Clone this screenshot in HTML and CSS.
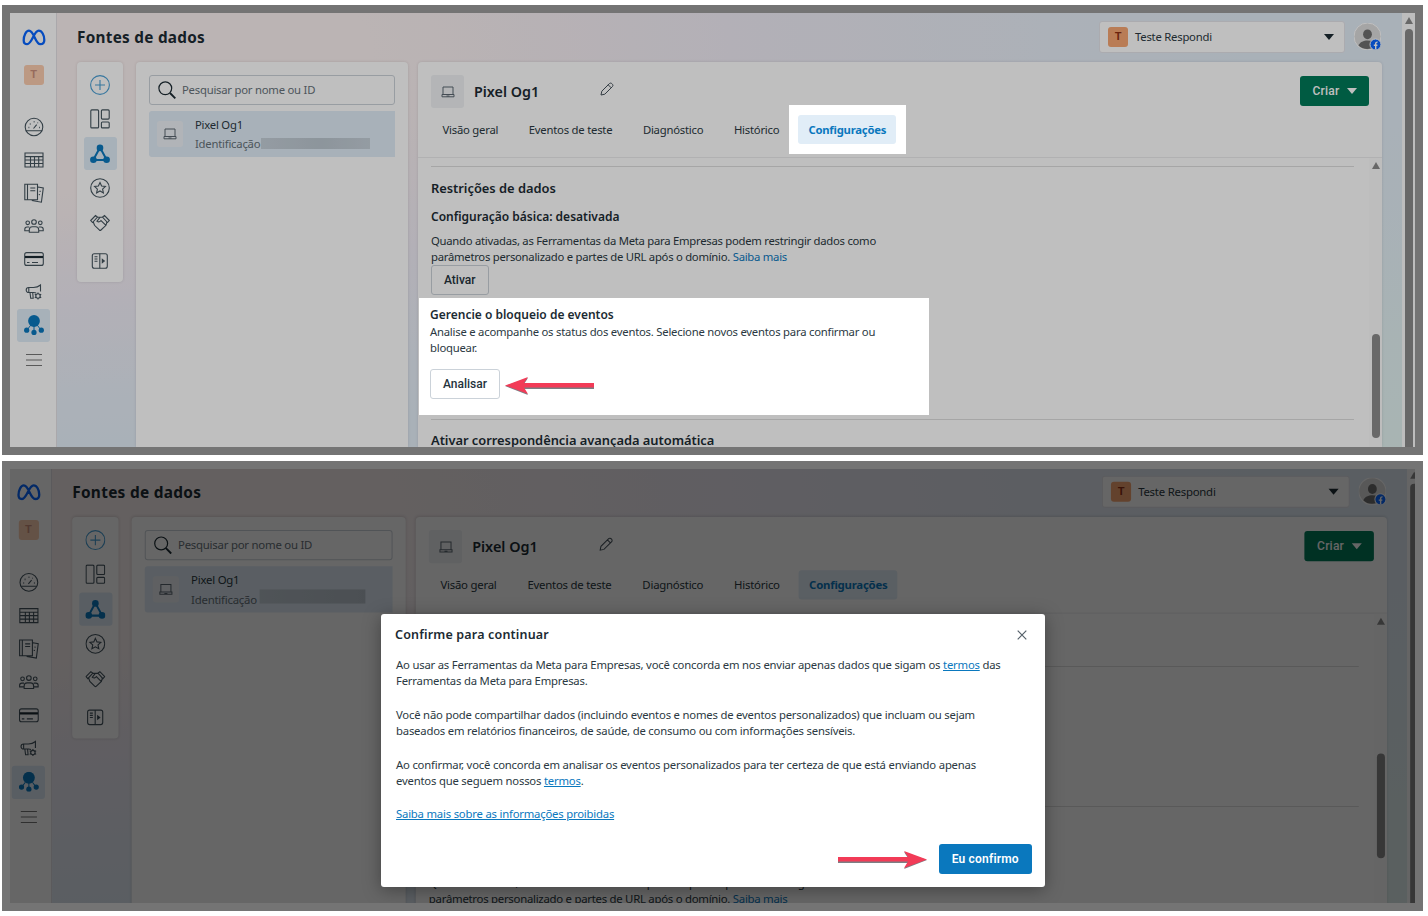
FILE: index.html
```html
<!DOCTYPE html>
<html lang="pt-BR">

<head>
  <meta charset="utf-8">
  <meta name="viewport" content="width=device-width, initial-scale=1.0">
  <title>Fontes de dados</title>
  <link rel="stylesheet" href="styles.css">
</head>

<body>
  <!-- icons used in both screens -->
  <svg class="sprite" aria-hidden="true">
    <symbol id="i-meta" viewBox="0 0 24 17">
      <path d="M1.700 11.200C1.700 6.600 4 1.700 7 1.700c5 0 6.300 13.500 11.300 13.500 2.600 0 4-1.600 4-4.300 0-4.800-2.400-9.200-5.600-9.200-4.800 0-6.800 13.500-11.500 13.500-2.400 0-3.500-1.600-3.500-4z" fill="none" stroke="#0866ff" stroke-width="2.300"/>
    </symbol>
    <symbol id="i-gauge" viewBox="0 0 20 20">
      <circle cx="10" cy="10" r="8.800"/><path d="M2 13.800h16M9.500 11.500l3.200-3.800"/>
      <path d="M4.500 10.500h.8M5.800 7h.8M9.700 4.800h.8M13.600 5.800h.5M15 10.500h.8" stroke-width="1.500"/>
    </symbol>
    <symbol id="i-table" viewBox="0 0 20 20">
      <path d="M1 3h18v14H1zM1 6.600h18M1 10h18M1 13.500h18M6.500 6.600V17M10.500 6.600V17M14.700 6.600V17"/>
    </symbol>
    <symbol id="i-docs" viewBox="0 0 20 20">
      <path d="M.8 1.200h12.700v15.600H.8zM3.500 1.200v15.600M6.300 5h5M6.300 7.700h5M14 4l5.300.9-1.900 14.300-9.600-1.700M15.500 8.200l1.200.2M14.800 11.500l1.200.2"/>
    </symbol>
    <symbol id="i-people" viewBox="0 0 20 20">
      <circle cx="10" cy="6" r="2.300"/><circle cx="3.700" cy="6.800" r="1.800"/><circle cx="16.300" cy="6.800" r="1.800"/>
      <path d="M5.300 16.300v-2.500c0-1.900 1.400-3 3-3h3.400c1.600 0 3 1.100 3 3v2.500zM5.300 14.800H.8v-1.600c0-1.300.9-2.200 2.200-2.200h2.200M14.700 14.800h4.500v-1.600c0-1.300-.9-2.200-2.200-2.200h-2.200"/>
    </symbol>
    <symbol id="i-card" viewBox="0 0 20 20">
      <rect x=".7" y="3.600" width="18.600" height="12.800" rx="2"/><path d="M1 8h18" stroke="#1c2b33" stroke-width="2.200"/><path d="M3 13.500h2.500M8 13.500h6"/>
    </symbol>
    <symbol id="i-mega" viewBox="0 0 20 20">
      <path d="M16.500 9.500V3c-2 1.700-4.200 2.500-7 2.500H4.700a2.200 2.200 0 0 0 0 5h5c.9 0 1.700.1 2.500.4M4.800 5.500v5M6 10.500l.7 5.700h2.500l-.5-5.700"/>
      <circle cx="14" cy="14" r="2.200"/><path d="M14 10.500v1.500M14 16v1.500M10.800 12.200l1.400.8M15.800 15l1.400.8M10.800 15.800l1.400-.8M15.800 13l1.400-.8"/>
    </symbol>
    <symbol id="i-hub" viewBox="0 0 20 20">
      <g fill="#0a78be" stroke="none"><circle cx="10" cy="6" r="5.900"/><circle cx="2.700" cy="15.200" r="2.600"/><circle cx="10" cy="17.400" r="2.600"/><circle cx="17.300" cy="15.200" r="2.600"/></g>
      <path d="M6.500 10.500L3 15M13.500 10.500L17 15M10 11v6" stroke="#0a78be" stroke-width="1"/>
    </symbol>
    <symbol id="i-menu" viewBox="0 0 20 20"><path d="M2 4.500h16M2 10h16M2 15.500h16"/></symbol>
    <symbol id="i-plus" viewBox="0 0 20 20"><g stroke="#4a9fd4"><circle cx="10" cy="10" r="9.400"/><path d="M10 5v10M5 10h10"/></g></symbol>
    <symbol id="i-grid" viewBox="0 0 20 20">
      <rect x=".8" y=".9" width="7.800" height="18" rx="1"/><rect x="11.400" y=".9" width="7.800" height="9.200" rx="1"/><rect x="11.400" y="13" width="7.800" height="5.900" rx="1"/>
    </symbol>
    <symbol id="i-tri" viewBox="0 0 20 20">
      <path d="M10 3.500L3.200 16h13.600z" stroke="#0a78be" stroke-width="2"/>
      <g fill="#0a78be" stroke="none"><circle cx="10" cy="3.900" r="3.300"/><circle cx="3.400" cy="15.800" r="3.300"/><circle cx="16.600" cy="15.800" r="3.300"/></g>
    </symbol>
    <symbol id="i-star" viewBox="0 0 20 20">
      <circle cx="10" cy="10" r="9.300"/><path d="M10 4.600l1.600 3.500 3.800.4-2.800 2.600.8 3.800-3.400-1.900-3.400 1.900.8-3.800-2.800-2.600 3.800-.4z"/>
    </symbol>
    <symbol id="i-hands" viewBox="0 0 20 20">
      <path d="M.7 7.500l4.800-4.900 2 1.500-5 5.400zM19.300 7.500l-4.800-4.900-2 1.500 5 5.400zM7.300 4.300h5.400M3.300 9l1.200 3.300 5 4.900c.5.400 1.100.2 1.500-.2l5-4.700L16.900 9M10 4.300L7 8.200c1.600 1.200 3 .7 4-.7l4.700 4.700"/>
    </symbol>
    <symbol id="i-panel" viewBox="0 0 20 20">
      <rect x="2.300" y="2.800" width="15" height="14.400" rx="2"/><path d="M9.800 2.800v14.400M4.500 5.800h3M4.500 8h3M4.500 10.200h3"/><path d="M12.300 8.500v3.200l2-1.600z" fill="#1c2b33"/>
    </symbol>
    <symbol id="i-laptop" viewBox="0 0 14 12">
      <path d="M2 1h10v7.500H2zM1 8.500h12v2.300H1zM5.500 10h3"/>
    </symbol>
    <symbol id="i-search" viewBox="0 0 18 18">
      <circle cx="7.300" cy="7.300" r="6.400" stroke="#1c2b33"/><path d="M12 12l5.300 5.300" stroke="#1c2b33" stroke-width="1.900"/>
    </symbol>
    <symbol id="i-pencil" viewBox="0 0 14 14">
      <path d="M1 13l.8-3.800 7.700-7.700c1.500-1.500 4.500 1.500 3 3L4.800 12.200zM8.200 2.800l3 3"/>
    </symbol>
    <symbol id="i-user" viewBox="0 0 27 27">
      <circle cx="13.500" cy="13.500" r="13.500" fill="#ddd" stroke="#fff"/>
      <ellipse cx="13.500" cy="11.300" rx="4.400" ry="4.900" fill="#6f6f6f"/>
      <path d="M4.500 22.500c1.500-3.600 5-5 9-5s7 1.500 8.500 5c-4.500 4.400-13 4.800-17.500 0z" fill="#6f6f6f"/>
      <circle cx="21.500" cy="21.500" r="5.500" fill="#0866ff" stroke="#fff"/>
      <path d="M21.700 26.500v-5.800c0-1.200.6-1.700 1.900-1.600M19.800 22.300h3.600" stroke="#fff" stroke-width="1.400" fill="none"/>
    </symbol>
  </svg>

  <div class="shots">

    <section class="shot shot--settings">
      <div class="app">
        <nav class="rail">
          <div class="rail-item"><svg class="logo"><use href="#i-meta"/></svg></div>
          <div class="rail-item rail-team"><span class="team team--faded">T</span></div>
          <div class="rail-item"><svg class="icon"><use href="#i-gauge"/></svg></div>
          <div class="rail-item"><svg class="icon"><use href="#i-table"/></svg></div>
          <div class="rail-item"><svg class="icon"><use href="#i-docs"/></svg></div>
          <div class="rail-item"><svg class="icon"><use href="#i-people"/></svg></div>
          <div class="rail-item"><svg class="icon"><use href="#i-card"/></svg></div>
          <div class="rail-item"><svg class="icon"><use href="#i-mega"/></svg></div>
          <div class="rail-item active"><svg class="icon"><use href="#i-hub"/></svg></div>
          <div class="rail-item rail-menu"><svg class="icon"><use href="#i-menu"/></svg></div>
        </nav>
        <div class="main">
          <header class="topbar">
            <h1 class="page-title">Fontes de dados</h1>
            <div class="account"><span class="team">T</span><span class="account-name">Teste Respondi</span><span class="caret"></span></div>
            <svg class="avatar"><use href="#i-user"/></svg>
          </header>
          <div class="columns">
            <nav class="tools">
              <div class="tool"><svg class="icon"><use href="#i-plus"/></svg></div>
              <div class="tool"><svg class="icon"><use href="#i-grid"/></svg></div>
              <div class="tool active"><svg class="icon"><use href="#i-tri"/></svg></div>
              <div class="tool"><svg class="icon"><use href="#i-star"/></svg></div>
              <div class="tool"><svg class="icon"><use href="#i-hands"/></svg></div>
              <div class="tool tool-last"><svg class="icon"><use href="#i-panel"/></svg></div>
            </nav>
            <aside class="sources">
              <div class="search"><svg class="search-icon"><use href="#i-search"/></svg><span>Pesquisar por nome ou ID</span></div>
              <div class="source">
                <span class="source-icon"><svg class="laptop"><use href="#i-laptop"/></svg></span>
                <div class="source-text">
                  <div class="source-name">Pixel Og1</div>
                  <div class="source-id"><span>Identificação</span><span class="redacted"></span></div>
                </div>
              </div>
            </aside>
            <main class="panel">
              <div class="panel-head">
                <div class="panel-title">
                  <span class="pixel-icon"><svg class="laptop"><use href="#i-laptop"/></svg></span>
                  <h2 class="pixel-name">Pixel Og1</h2>
                  <svg class="pencil"><use href="#i-pencil"/></svg>
                  <button class="create">Criar <span class="caret"></span></button>
                </div>
                <div class="tabs">
                  <span class="tab">Visão geral</span>
                  <span class="tab">Eventos de teste</span>
                  <span class="tab">Diagnóstico</span>
                  <span class="tab">Histórico</span>
                  <span class="tab-wrap spotlight"><span class="tab selected">Configurações</span></span>
                </div>
              </div>
              <div class="panel-body">
                <div class="content">
                  <div class="block">
                    <h3 class="section-title">Restrições de dados</h3>
                    <h4 class="sub-title">Configuração básica: desativada</h4>
                    <p class="text text--wide">Quando ativadas, as Ferramentas da Meta para Empresas podem restringir dados como<br>parâmetros personalizado e partes de URL após o domínio. <a class="link">Saiba mais</a></p>
                    <button class="btn">Ativar</button>
                  </div>
                  <div class="blocking spotlight">
                    <h4 class="sub-title">Gerencie o bloqueio de eventos</h4>
                    <p class="text">Analise e acompanhe os status dos eventos. Selecione novos eventos para confirmar ou<br>bloquear.</p>
                    <div class="btn-row">
                      <button class="btn">Analisar</button>
                      <svg class="arrow" viewBox="0 0 89 18"><path d="M0 9L23 1l-4 6h70v5H19l4 6z" fill="#7c7f84"/><path d="M0 8.500L23 0l-4 6h70v4.500H19l4 6.500z" fill="#f23b57"/></svg>
                    </div>
                  </div>
                  <div class="block block--next">
                    <h3 class="section-title">Ativar correspondência avançada automática</h3>
                  </div>
                </div>
                <div class="scroll"><span class="scroll-up"></span><span class="scroll-thumb"></span></div>
              </div>
            </main>
          </div>
        </div>
        <div class="page-scroll"><span class="scroll-up"></span><span class="scroll-thumb"></span></div>
      </div>
      <div class="dim"></div>
    </section>

    <section class="shot shot--confirm">
      <div class="app">
        <nav class="rail">
          <div class="rail-item"><svg class="logo"><use href="#i-meta"/></svg></div>
          <div class="rail-item rail-team"><span class="team team--faded">T</span></div>
          <div class="rail-item"><svg class="icon"><use href="#i-gauge"/></svg></div>
          <div class="rail-item"><svg class="icon"><use href="#i-table"/></svg></div>
          <div class="rail-item"><svg class="icon"><use href="#i-docs"/></svg></div>
          <div class="rail-item"><svg class="icon"><use href="#i-people"/></svg></div>
          <div class="rail-item"><svg class="icon"><use href="#i-card"/></svg></div>
          <div class="rail-item"><svg class="icon"><use href="#i-mega"/></svg></div>
          <div class="rail-item active"><svg class="icon"><use href="#i-hub"/></svg></div>
          <div class="rail-item rail-menu"><svg class="icon"><use href="#i-menu"/></svg></div>
        </nav>
        <div class="main">
          <header class="topbar">
            <h1 class="page-title">Fontes de dados</h1>
            <div class="account"><span class="team">T</span><span class="account-name">Teste Respondi</span><span class="caret"></span></div>
            <svg class="avatar"><use href="#i-user"/></svg>
          </header>
          <div class="columns">
            <nav class="tools">
              <div class="tool"><svg class="icon"><use href="#i-plus"/></svg></div>
              <div class="tool"><svg class="icon"><use href="#i-grid"/></svg></div>
              <div class="tool active"><svg class="icon"><use href="#i-tri"/></svg></div>
              <div class="tool"><svg class="icon"><use href="#i-star"/></svg></div>
              <div class="tool"><svg class="icon"><use href="#i-hands"/></svg></div>
              <div class="tool tool-last"><svg class="icon"><use href="#i-panel"/></svg></div>
            </nav>
            <aside class="sources">
              <div class="search"><svg class="search-icon"><use href="#i-search"/></svg><span>Pesquisar por nome ou ID</span></div>
              <div class="source">
                <span class="source-icon"><svg class="laptop"><use href="#i-laptop"/></svg></span>
                <div class="source-text">
                  <div class="source-name">Pixel Og1</div>
                  <div class="source-id"><span>Identificação</span><span class="redacted"></span></div>
                </div>
              </div>
            </aside>
            <main class="panel">
              <div class="panel-head">
                <div class="panel-title">
                  <span class="pixel-icon"><svg class="laptop"><use href="#i-laptop"/></svg></span>
                  <h2 class="pixel-name">Pixel Og1</h2>
                  <svg class="pencil"><use href="#i-pencil"/></svg>
                  <button class="create">Criar <span class="caret"></span></button>
                </div>
                <div class="tabs">
                  <span class="tab">Visão geral</span>
                  <span class="tab">Eventos de teste</span>
                  <span class="tab">Diagnóstico</span>
                  <span class="tab">Histórico</span>
                  <span class="tab-wrap"><span class="tab selected">Configurações</span></span>
                </div>
              </div>
              <div class="panel-body">
                <div class="content">
                  <div class="block block--empty"></div>
                  <div class="block block--covered">
                    <p class="text text--wide">Quando ativadas, as Ferramentas da Meta para Empresas podem restringir dados como<br>parâmetros personalizado e partes de URL após o domínio. <a class="link">Saiba mais</a></p>
                  </div>
                </div>
                <div class="scroll"><span class="scroll-up"></span><span class="scroll-thumb"></span></div>
              </div>
            </main>
          </div>
        </div>
        <div class="page-scroll"><span class="scroll-up"></span><span class="scroll-thumb"></span></div>
      </div>
      <div class="dim"></div>

      <div class="modal">
        <div class="modal-head">
          <h2 class="modal-title">Confirme para continuar</h2>
          <svg class="close" viewBox="0 0 10 10"><path d="M.7.7l8.600 8.600M9.300.7L.7 9.300"/></svg>
        </div>
        <div class="modal-text">
          <p>Ao usar as Ferramentas da Meta para Empresas, você concorda em nos enviar apenas dados que sigam os <a class="link">termos</a> das<br>Ferramentas da Meta para Empresas.</p>
          <p>Você não pode compartilhar dados (incluindo eventos e nomes de eventos personalizados) que incluam ou sejam<br>baseados em relatórios financeiros, de saúde, de consumo ou com informações sensíveis.</p>
          <p>Ao confirmar, você concorda em analisar os eventos personalizados para ter certeza de que está enviando apenas<br>eventos que seguem nossos <a class="link">termos</a>.</p>
          <p><a class="link">Saiba mais sobre as informações proibidas</a></p>
        </div>
        <div class="modal-foot">
          <svg class="arrow arrow--right" viewBox="0 0 89 18"><path d="M89 9L66 1l4 6H0v5h70l-4 6z" fill="#7c7f84"/><path d="M89 8.500L66 0l4 6H0v4.500h70L66 17z" fill="#f23b57"/></svg>
          <button class="confirm">Eu confirmo</button>
        </div>
      </div>
    </section>

  </div>
</body>

</html>
```

FILE: styles.css
```css
* {
  box-sizing: border-box;
}

body {
  margin: 0;
  background: #fff;
  color: #2b3942;
  font-family: "Noto Sans", "Open Sans", sans-serif;
  font-size: 11.3px;
  letter-spacing: -0.23px;
  overflow: hidden;
}

h1, h2, h3, h4, p {
  margin: 0;
}

h1, h2, h3, h4 {
  color: #1c2b33;
  letter-spacing: 0;
}

button {
  font-family: Roboto, sans-serif;
}

.sprite {
  display: none;
}

.shots {
  display: flex;
  flex-direction: column;
  gap: 6px;
  padding: 5px 5px 5px 2px;
}

.shot {
  position: relative;
  width: 1421px;
  height: 450px;
  border: 8px solid #747474;
  overflow: hidden;
}

.app {
  display: flex;
  width: 1405px;
  height: 434px;
}

/* the second capture is slightly larger and cropped on the left */
.shot--confirm .app {
  height: 440px;
  transform-origin: 0 0;
  transform: translate(-5.3px, -1.4px) scale(1.0075, 1.007);
}

.dim {
  position: absolute;
  inset: 0;
  z-index: 1;
  background: rgba(0, 0, 0, 0.25);
}

.shot--confirm .dim {
  background: rgba(0, 0, 0, 0.6);
}

.spotlight {
  position: relative;
  z-index: 2;
  background: #fff;
}

/* left rail */
.rail {
  width: 47px;
  flex: none;
  padding: 7.5px 0 0 1px;
  background: #fff;
  border-right: 1px solid #e3e0e5;
  display: flex;
  flex-direction: column;
  align-items: center;
}

.rail-item {
  width: 33px;
  height: 33px;
  flex: none;
  display: flex;
  align-items: center;
  justify-content: center;
  border-radius: 3px;
}

.rail-team {
  margin: 4.5px 0 19.5px;
}

.rail-menu {
  margin-top: 2px;
}

.rail-item.active,
.tool.active {
  background: #dfecf7;
}

.icon {
  width: 20px;
  height: 20px;
  fill: none;
  stroke: #44545e;
  stroke-width: 1.1;
}

.rail-menu .icon {
  stroke: #777;
}

.logo {
  width: 24px;
  height: 17px;
}

.team {
  width: 20px;
  height: 20px;
  border-radius: 3px;
  background: #f7a672;
  color: #8f2f12;
  font: bold 11px/20px Roboto, sans-serif;
  text-align: center;
}

.team--faded {
  background: #fbcdaf;
  color: #c98f7c;
}

/* page */
.main {
  flex: 1;
  display: flex;
  flex-direction: column;
  padding: 0 20px;
  background:
    radial-gradient(40% 80% at 100% 106%, #e0f1ee 0%, rgba(224, 241, 238, 0) 100%),
    radial-gradient(298% 250% at -21.4% 8.8%, #faf0f0 0%, #faf0f0 15%, #efebf4 24%, #e6ecf6 32%, #e2ecf6 37%);
}

.topbar {
  height: 49px;
  flex: none;
  padding-bottom: 1.5px;
  display: flex;
  align-items: center;
}

.page-title {
  flex: 1;
  font-size: 15.3px;
  font-weight: 700;
  letter-spacing: 0.28px;
}

.account {
  width: 246px;
  height: 32px;
  margin-right: 9px;
  padding: 0 10px 0 8px;
  display: flex;
  align-items: center;
  background: #fff;
  border: 1px solid #e4e4ea;
  border-radius: 3px;
}

.account-name {
  flex: 1;
  margin-left: 7px;
}

.caret {
  border: 5px solid transparent;
  border-top: 6px solid #1c2b33;
  border-bottom: 0;
}

.avatar {
  width: 27px;
  height: 27px;
  margin: -1px 1px 0 0;
  overflow: visible;
}

.columns {
  flex: 1;
  display: flex;
  min-height: 0;
}

.tools {
  width: 46px;
  height: 220px;
  margin-right: 13px;
  padding-top: 6px;
  background: #fff;
  border-radius: 4px;
  box-shadow: 0 0 3px rgba(0, 0, 0, 0.12);
  display: flex;
  flex-direction: column;
  align-items: center;
  gap: 1.5px;
}

.tool {
  width: 33px;
  height: 33px;
  display: flex;
  align-items: center;
  justify-content: center;
  border-radius: 3px;
}

.tool-last {
  margin-top: 4px;
}

.sources {
  width: 272px;
  margin-right: 10px;
  padding: 12.5px 13px;
  background: #fff;
  border-radius: 4px 4px 0 0;
  box-shadow: 0 0 3px rgba(0, 0, 0, 0.12);
}

.search {
  height: 30px;
  padding-left: 8px;
  display: flex;
  align-items: center;
  gap: 6px;
  border: 1px solid #cbd2d9;
  border-radius: 3px;
  color: #67727a;
}

.search-icon {
  width: 18px;
  height: 18px;
  fill: none;
  stroke-width: 1.2;
}

.source {
  height: 46px;
  margin-top: 6.5px;
  padding-left: 8px;
  display: flex;
  align-items: center;
  background: #e0ecf7;
  border-radius: 3px 0 0 3px;
}

.source-icon {
  width: 26px;
  height: 26px;
  display: flex;
  align-items: center;
  justify-content: center;
  background: #edf1f6;
  border-radius: 3px;
}

.laptop {
  width: 14px;
  height: 12px;
  fill: none;
  stroke: #5b6670;
}

.source-text {
  margin-left: 12px;
  line-height: 19.5px;
}

.source-id {
  display: flex;
  align-items: center;
  gap: 1px;
  color: #67727a;
}

.redacted {
  width: 109px;
  height: 11px;
  background: linear-gradient(90deg, #c6d0d9, #bcc7d0 55%, #c6d0d9);
}

.shot--confirm .redacted {
  width: 105px;
  height: 14px;
  margin: -5px 0 0 2px;
  background: linear-gradient(90deg, #c6d1da, #bcc6d0);
}

/* pixel panel */
.panel {
  flex: 1;
  display: flex;
  flex-direction: column;
  background: #fff;
  border-radius: 4px 4px 0 0;
  box-shadow: 0 0 3px rgba(0, 0, 0, 0.12);
}

.panel-head {
  height: 96px;
  flex: none;
  padding: 13px 13px 0;
  border-bottom: 1px solid #ececee;
}

.panel-title {
  height: 33px;
  display: flex;
  align-items: center;
}

.pixel-icon {
  width: 33px;
  height: 33px;
  display: flex;
  align-items: center;
  justify-content: center;
  background: #f0f2f5;
  border-radius: 3px;
}

.pixel-name {
  width: 126px;
  margin: -1px 0 0 10px;
  font-size: 14.3px;
  font-weight: 600;
}

.pencil {
  width: 14px;
  height: 14px;
  margin-top: -5px;
  fill: none;
  stroke: #44505a;
}

.create {
  width: 69px;
  height: 30px;
  margin: -1px 0 0 auto;
  padding: 0 0 0 1px;
  display: flex;
  align-items: center;
  justify-content: center;
  gap: 8px;
  background: #007a58;
  border: 0;
  border-radius: 3px;
  color: #fff;
  font-size: 12px;
  font-weight: 500;
  letter-spacing: 0.2px;
}

.create .caret {
  border-top-color: #fff;
}

.tabs {
  height: 29px;
  margin: 7px 0 0 1.5px;
  display: flex;
  align-items: center;
  gap: 10.6px;
}

.tab {
  height: 29px;
  padding: 0 10px;
  line-height: 29px;
  white-space: nowrap;
}

.tab-wrap {
  padding: 10px 9.5px;
  margin: -10px -11px;
}

.selected {
  display: block;
  background: #e1edf7;
  border-radius: 3px;
  color: #0a78be;
  font-weight: bold;
}

.panel-body {
  flex: 1;
  display: flex;
  min-height: 0;
  overflow: hidden;
}

.content {
  flex: 1;
}

.block {
  margin: 8px 15px 0 13px;
  border-top: 1px solid #dedede;
}

.section-title {
  padding-top: 11px;
  font-size: 12.9px;
  font-weight: 600;
  letter-spacing: -0.03px;
  line-height: 20px;
}

.sub-title {
  font-size: 12px;
  font-weight: 600;
  line-height: 18px;
}

.block .sub-title {
  margin-top: 10px;
}

.text {
  line-height: 16.3px;
  white-space: nowrap;
}

.text--wide {
  letter-spacing: -0.27px;
}

.block .text {
  margin-top: 7px;
}

.link {
  color: #0a78be;
}

.btn {
  height: 30px;
  padding: 0 12px;
  display: block;
  background: #fff;
  border: 1px solid #cbd2d9;
  border-radius: 3px;
  color: #24333c;
  font-size: 12px;
  font-weight: 500;
}

.block .btn {
  margin-top: -0.6px;
}

.blocking {
  width: 510px;
  height: 116.5px;
  margin: 3px 0 0 1px;
  padding: 8px 11px 0;
}

.btn-row {
  margin-top: 12px;
  display: flex;
  align-items: center;
  gap: 5px;
}

.arrow {
  width: 89px;
  height: 18px;
  margin-top: 5px;
}

.block--next {
  margin-top: 4px;
}

.block--next .section-title {
  padding-top: 10.5px;
}

.block--empty {
  height: 139px;
  margin-top: 52px;
}

.block--covered {
  margin-top: 0;
  padding-top: 59.5px;
}

/* scrollbars */
.scroll,
.page-scroll {
  width: 13px;
  flex: none;
  display: flex;
  flex-direction: column;
  align-items: center;
  background: #fcfcfc;
}

.scroll-up {
  margin-top: 4px;
  border: 4.5px solid transparent;
  border-top: 0;
  border-bottom: 7px solid #8b8b8b;
}

.scroll-thumb {
  width: 8px;
  height: 104px;
  margin-top: 165px;
  background: #8b8b8b;
  border-radius: 4px;
}

.shot--confirm .scroll .scroll-thumb {
  margin-top: 128px;
}

.page-scroll .scroll-thumb {
  height: 430px;
  margin-top: 5px;
  flex: none;
}

/* confirmation */
.modal {
  position: absolute;
  z-index: 2;
  left: 371px;
  top: 144.5px;
  width: 664px;
  height: 273px;
  padding: 12px 13.5px 13px 14px;
  background: #fff;
  border-radius: 3px;
  box-shadow: 0 3px 18px rgba(0, 0, 0, 0.35);
  display: flex;
  flex-direction: column;
}

.modal-head {
  display: flex;
  align-items: center;
  justify-content: space-between;
  padding-right: 5px;
}

.modal-title {
  font-size: 12.5px;
  font-weight: 600;
  letter-spacing: 0.17px;
  line-height: 18px;
}

.close {
  width: 10px;
  height: 10px;
  stroke: #56616a;
  stroke-width: 1.2;
}

.modal-text {
  margin: 13.5px 0 0 1px;
  letter-spacing: -0.2px;
  line-height: 16.4px;
  white-space: nowrap;
}

.modal-text p {
  margin-bottom: 17px;
}

.modal-text .link {
  text-decoration: underline;
}

.modal-foot {
  margin-top: auto;
  display: flex;
  align-items: center;
  justify-content: flex-end;
  gap: 12px;
}

.arrow--right {
  margin-top: 3px;
}

.confirm {
  width: 92.5px;
  height: 30px;
  padding: 0;
  background: #0a78be;
  border: 0;
  border-radius: 3px;
  color: #fff;
  font-size: 12px;
  font-weight: 600;
  letter-spacing: 0.2px;
}
```
